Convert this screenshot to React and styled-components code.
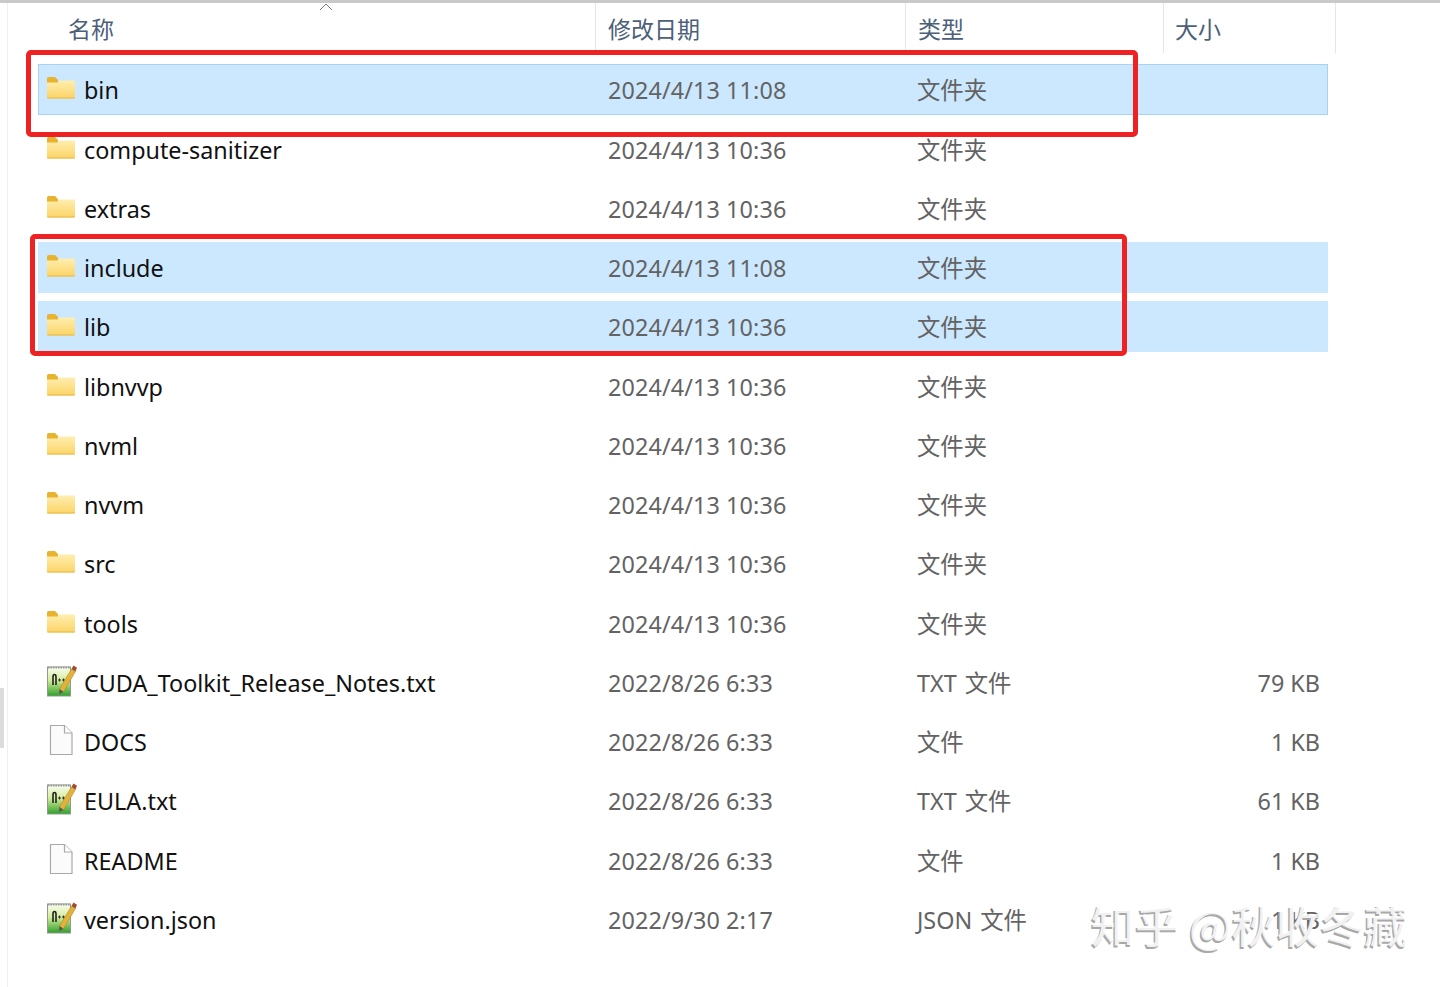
import React from "react";
import styled, { createGlobalStyle } from "styled-components";

const Global = createGlobalStyle`
  html, body { margin: 0; padding: 0; background: #fff; }
  body { font-family: "Noto Sans", "Noto Sans CJK SC", sans-serif; overflow: hidden; }
`;

const Page = styled.div`
  position: relative;
  width: 1440px;
  height: 987px;
  overflow: hidden;
  background: #fff;
  border-top: 3px solid #c9c9c9;
  box-sizing: border-box;
`;

const Pane = styled.div`
  margin-left: 7px;
  height: 984px;
  border-left: 1px solid #f0f0f0;
  display: flex;
  flex-direction: column;
`;

const Scroll = styled.div`
  position: absolute;
  left: 0;
  top: 685px;
  width: 4px;
  height: 60px;
  background: #dcdcdc;
`;

const Columns = "557px 310px 258px 165px";

const Header = styled.div`
  display: grid;
  grid-template-columns: 558px 310px 258px 172px;
  height: 50px;
  margin-left: 30px;
  margin-bottom: 10.85px;
  position: relative;
`;

const HeaderCell = styled.div`
  display: flex;
  align-items: center;
  height: 50px;
  padding-left: ${(p) => p.$pad}px;
  padding-bottom: 1px;
  box-sizing: border-box;
  font-size: 23px;
  color: #4c607a;
  border-right: 1px solid #e5e5e5;
`;

const SortCaret = styled.svg`
  position: absolute;
  left: 281px;
  top: 0;
  width: 14px;
  height: 8px;
`;

const Rows = styled.div`
  display: flex;
  flex-direction: column;
  gap: 8.25px;
  margin-left: 30px;
  width: 1290px;
`;

const Row = styled.div`
  display: grid;
  grid-template-columns: ${Columns};
  align-items: center;
  height: 51px;
  box-sizing: border-box;
  background: ${(p) => (p.$selected ? "#cce8ff" : "transparent")};
  border: 1px solid ${(p) => (p.$outlined ? "#a8d4f2" : "transparent")};
  font-size: 23.35px;
  line-height: 30px;
`;

const NameCell = styled.div`
  display: flex;
  align-items: center;
  color: #111;
  padding-left: 8px;
  padding-top: 2px;
`;

const IconSlot = styled.span`
  width: 37px;
  height: 32px;
  flex: none;
  display: flex;
  align-items: center;
  margin-top: -4px;
`;

const DateCell = styled.div`
  color: #636363;
  padding-left: 12px;
  padding-top: 2px;
  letter-spacing: 0.12px;
`;

const TypeCell = styled.div`
  color: #636363;
  padding-left: 11px;
  padding-top: 2px;
  word-spacing: 2px;
`;

const SizeCell = styled.div`
  color: #636363;
  text-align: right;
  padding-right: 9px;
  padding-top: 2px;
`;

const RedBox = styled.div`
  position: absolute;
  left: ${(p) => p.$x}px;
  top: ${(p) => p.$y}px;
  width: ${(p) => p.$w}px;
  height: ${(p) => p.$h}px;
  box-sizing: border-box;
  border: 5px solid #ee2222;
  border-radius: 5px;
`;

const Watermark = styled.div`
  position: absolute;
  left: 1091px;
  top: 893px;
  font-family: "Noto Sans CJK SC", sans-serif;
  font-size: 44px;
  line-height: 56px;
  font-weight: 500;
  white-space: nowrap;
  color: rgba(255, 255, 255, 0.86);
  text-shadow: -1.5px 1.5px 0 #a8a8a8;
`;

const FolderIcon = () => (
  <svg width="28" height="22" viewBox="0 0 28 22">
    <defs>
      <linearGradient id="fold" x1="0" y1="0" x2="0" y2="1">
        <stop offset="0" stopColor="#ffeeb0" />
        <stop offset="1" stopColor="#fbd466" />
      </linearGradient>
    </defs>
    <path d="M0 1.5 Q0 0 1.5 0 H8 L11 3 V6 H0 Z" fill="#e8b32e" />
    <path d="M0 5.5 H10.5 L12.5 3.5 H27 Q28 3.5 28 4.5 V20.5 Q28 21.5 27 21.5 H1 Q0 21.5 0 20.5 Z" fill="url(#fold)" />
    <path d="M0 20.4 H28 V20.5 Q28 21.5 27 21.5 H1 Q0 21.5 0 20.4 Z" fill="#e6b84a" />
  </svg>
);

const FileIcon = () => (
  <svg width="28" height="32" viewBox="0 0 28 32">
    <path d="M3.5 1.5 H17.5 L25 9 V30.5 H3.5 Z" fill="#fbfbfb" stroke="#a9a9a9" strokeWidth="1.2" />
    <path d="M17.5 1.5 V9 H25" fill="#fff" stroke="#a9a9a9" strokeWidth="1.2" />
  </svg>
);

const NotepadIcon = () => (
  <svg width="30" height="32" viewBox="0 0 30 32">
    <defs>
      <linearGradient id="npp" x1="0" y1="0" x2="0" y2="1">
        <stop offset="0" stopColor="#fafdf2" />
        <stop offset="0.45" stopColor="#d4ec9c" />
        <stop offset="1" stopColor="#2f9f2a" />
      </linearGradient>
    </defs>
    <rect x="0.5" y="2" width="23" height="29" fill="url(#npp)" stroke="#8d9a8d" />
    <path d="M1 2.5 H23" stroke="#9a9a9a" strokeWidth="2" strokeDasharray="1.5 1" />
    <path d="M6 20 V12 Q6 9.5 7.5 9.5 Q9 9.5 9 12 V20" fill="none" stroke="#222" strokeWidth="1.6" />
    <path d="M11 15 H14 M12.5 13.5 V16.5 M15 15 H18 M16.5 13.5 V16.5" stroke="#333" strokeWidth="1" />
    <path d="M12.5 24 L24.5 4 L28.5 6.5 L16.5 27 Z" fill="#e3b23c" stroke="#a97f1c" strokeWidth="0.5" />
    <path d="M24.5 4 L26.5 0.5 L30 2.8 L28.5 6.5 Z" fill="#a34a2a" />
    <path d="M12.5 24 L12 29 L16.5 27 Z" fill="#555" />
  </svg>
);

const icons = { folder: <FolderIcon />, file: <FileIcon />, note: <NotepadIcon /> };

const rows = [
  { n: "bin", d: "2024/4/13 11:08", t: "文件夹", i: "folder", sel: true, out: true },
  { n: "compute-sanitizer", d: "2024/4/13 10:36", t: "文件夹", i: "folder" },
  { n: "extras", d: "2024/4/13 10:36", t: "文件夹", i: "folder" },
  { n: "include", d: "2024/4/13 11:08", t: "文件夹", i: "folder", sel: true },
  { n: "lib", d: "2024/4/13 10:36", t: "文件夹", i: "folder", sel: true },
  { n: "libnvvp", d: "2024/4/13 10:36", t: "文件夹", i: "folder" },
  { n: "nvml", d: "2024/4/13 10:36", t: "文件夹", i: "folder" },
  { n: "nvvm", d: "2024/4/13 10:36", t: "文件夹", i: "folder" },
  { n: "src", d: "2024/4/13 10:36", t: "文件夹", i: "folder" },
  { n: "tools", d: "2024/4/13 10:36", t: "文件夹", i: "folder" },
  { n: "CUDA_Toolkit_Release_Notes.txt", d: "2022/8/26 6:33", t: "TXT 文件", s: "79 KB", i: "note" },
  { n: "DOCS", d: "2022/8/26 6:33", t: "文件", s: "1 KB", i: "file" },
  { n: "EULA.txt", d: "2022/8/26 6:33", t: "TXT 文件", s: "61 KB", i: "note" },
  { n: "README", d: "2022/8/26 6:33", t: "文件", s: "1 KB", i: "file" },
  { n: "version.json", d: "2022/9/30 2:17", t: "JSON 文件", s: "1 KB", i: "note" },
];

export default function App() {
  return (
    <Page>
      <Global />
      <Scroll />
      <Pane>
        <Header>
          <HeaderCell $pad={30}>名称</HeaderCell>
          <HeaderCell $pad={12}>修改日期</HeaderCell>
          <HeaderCell $pad={12}>类型</HeaderCell>
          <HeaderCell $pad={11}>大小</HeaderCell>
          <SortCaret viewBox="0 0 14 8">
            <path d="M1 7 L7 1 L13 7" fill="none" stroke="#7a7a7a" strokeWidth="1" />
          </SortCaret>
        </Header>
        <Rows>
          {rows.map((r) => (
            <Row key={r.n} $selected={r.sel} $outlined={r.out}>
              <NameCell>
                <IconSlot>{icons[r.i]}</IconSlot>
                {r.n}
              </NameCell>
              <DateCell>{r.d}</DateCell>
              <TypeCell>{r.t}</TypeCell>
              <SizeCell>{r.s}</SizeCell>
            </Row>
          ))}
        </Rows>
      </Pane>
      <RedBox $x={26} $y={47} $w={1112} $h={87} />
      <RedBox $x={30} $y={231} $w={1097} $h={122} />
      <Watermark>知乎 @秋收冬藏</Watermark>
    </Page>
  );
}
